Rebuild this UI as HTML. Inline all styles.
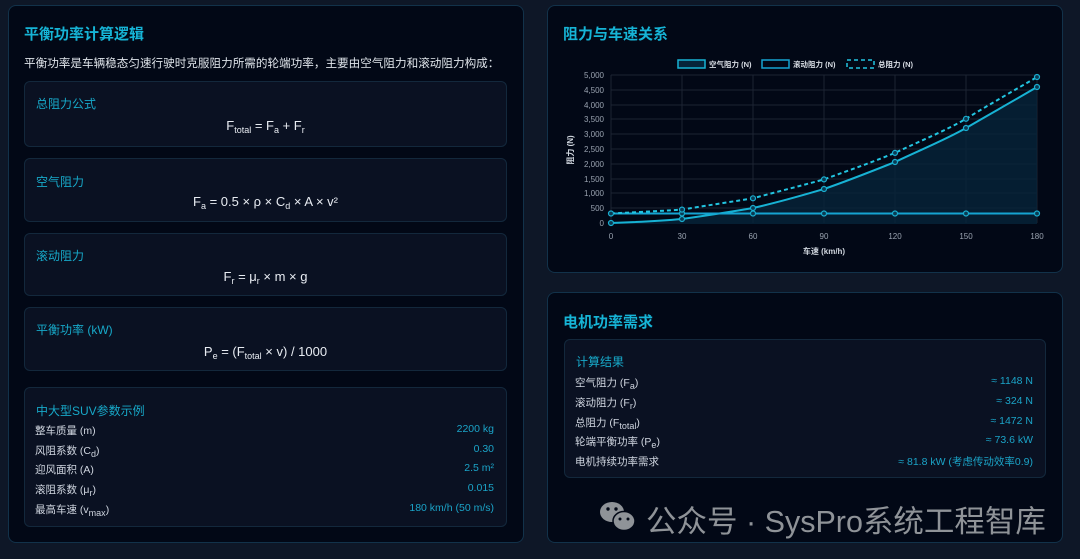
<!DOCTYPE html>
<html><head><meta charset="utf-8"><style>
*{margin:0;padding:0;box-sizing:border-box}
body{width:1080px;height:559px;background:#0e1727;font-family:"Liberation Sans","Noto Sans CJK SC",sans-serif;color:#d8dde6;position:relative;overflow:hidden}
.panel{position:absolute;background:#020816;border:1px solid #12324a;border-radius:8px}
.box{position:absolute;background:#0a1122;border:1px solid #13283c;border-radius:6px}
.h{position:absolute;color:#16b4d6;font-weight:bold;font-size:15px}
.lbl{position:absolute;color:#17a9c9;font-size:12px}
.f{position:absolute;left:0;right:0;text-align:center;font-size:13px;color:#e8ecf2}
sub{font-size:9px;vertical-align:-3px;line-height:0}
.row{position:absolute;left:10px;right:12px;font-size:10.5px;color:#d0d6e0;display:flex;justify-content:space-between}
.row span:last-child{color:#1ba4c8}
</style></head><body>
<div class="panel" style="left:8px;top:5px;width:516px;height:538px"></div>
<div class="h" style="left:24px;top:23px">平衡功率计算逻辑</div>
<div style="position:absolute;left:24px;top:55px;font-size:11.6px;color:#dfe4ea;white-space:nowrap">平衡功率是车辆稳态匀速行驶时克服阻力所需的轮端功率，主要由空气阻力和滚动阻力构成：</div>
<div class="box" style="left:24px;top:81px;width:483px;height:66px"><div class="lbl" style="left:11px;top:13px">总阻力公式</div><div class="f" style="top:36px">F<sub>total</sub> = F<sub>a</sub> + F<sub>r</sub></div></div>
<div class="box" style="left:24px;top:158px;width:483px;height:64px"><div class="lbl" style="left:11px;top:14px">空气阻力</div><div class="f" style="top:35px">F<sub>a</sub> = 0.5 × ρ × C<sub>d</sub> × A × v²</div></div>
<div class="box" style="left:24px;top:233px;width:483px;height:63px"><div class="lbl" style="left:11px;top:13px">滚动阻力</div><div class="f" style="top:35px">F<sub>r</sub> = μ<sub>r</sub> × m × g</div></div>
<div class="box" style="left:24px;top:307px;width:483px;height:64px"><div class="lbl" style="left:11px;top:13px">平衡功率 (kW)</div><div class="f" style="top:36px">P<sub>e</sub> = (F<sub>total</sub> × v) / 1000</div></div>
<div class="box" style="left:24px;top:387px;width:483px;height:140px">
<div class="lbl" style="left:11px;top:14px">中大型SUV参数示例</div>
<div class="row" style="top:35px"><span>整车质量 (m)</span><span>2200 kg</span></div>
<div class="row" style="top:55px"><span>风阻系数 (C<sub>d</sub>)</span><span>0.30</span></div>
<div class="row" style="top:74px"><span>迎风面积 (A)</span><span>2.5 m²</span></div>
<div class="row" style="top:94px"><span>滚阻系数 (μ<sub>r</sub>)</span><span>0.015</span></div>
<div class="row" style="top:114px"><span>最高车速 (v<sub>max</sub>)</span><span>180 km/h (50 m/s)</span></div>
</div>

<div class="panel" style="left:547px;top:5px;width:516px;height:268px"></div>
<div class="h" style="left:563px;top:23px">阻力与车速关系</div>
<svg style="position:absolute;left:0;top:0" width="1080" height="559" font-family="Liberation Sans, Noto Sans CJK SC, sans-serif">
<g stroke="#1c2433" stroke-width="1">
<line x1="611" y1="75" x2="1037" y2="75"/><line x1="611" y1="90" x2="1037" y2="90"/><line x1="611" y1="105" x2="1037" y2="105"/><line x1="611" y1="119" x2="1037" y2="119"/><line x1="611" y1="134" x2="1037" y2="134"/><line x1="611" y1="149" x2="1037" y2="149"/><line x1="611" y1="164" x2="1037" y2="164"/><line x1="611" y1="179" x2="1037" y2="179"/><line x1="611" y1="193" x2="1037" y2="193"/><line x1="611" y1="208" x2="1037" y2="208"/>
<line x1="611" y1="75" x2="611" y2="223"/><line x1="682" y1="75" x2="682" y2="223"/><line x1="753" y1="75" x2="753" y2="223"/><line x1="824" y1="75" x2="824" y2="223"/><line x1="895" y1="75" x2="895" y2="223"/><line x1="966" y1="75" x2="966" y2="223"/><line x1="1037" y1="75" x2="1037" y2="223"/>
</g>
<path d="M611 223 C640 222 660 221 682 219 C710 215 730 212 753 208 C780 202 800 196 824 189 C850 180 870 172 895 162 C920 150 945 140 966 128 C990 114 1015 100 1037 87 L1037 224 L611 224Z" fill="#06243a" opacity="0.8"/>
<path d="M611 223 C640 222 660 221 682 219 C710 215 730 212 753 208 C780 202 800 196 824 189 C850 180 870 172 895 162 C920 150 945 140 966 128 C990 114 1015 100 1037 87" fill="none" stroke="#17b2d4" stroke-width="2"/>
<line x1="611" y1="213.5" x2="1037" y2="213.5" stroke="#15a4d2" stroke-width="2"/>
<path d="M611 213.5 C640 212 660 211 682 209.6 C710 205 730 202 753 198.3 C780 191 800 186 824 179.4 C850 170 870 163 895 152.9 C920 141 945 131 966 118.8 C990 104 1015 90 1037 77" fill="none" stroke="#22c4e0" stroke-width="2" stroke-dasharray="4,3"/>
<g fill="#0b3a52" stroke="#1aaed0" stroke-width="1.2">
<circle cx="611" cy="223" r="2.5"/><circle cx="682" cy="219" r="2.5"/><circle cx="753" cy="208" r="2.5"/><circle cx="824" cy="189" r="2.5"/><circle cx="895" cy="162" r="2.5"/><circle cx="966" cy="128" r="2.5"/><circle cx="1037" cy="87" r="2.5"/>
<circle cx="611" cy="213.5" r="2.5"/><circle cx="682" cy="213.5" r="2.5"/><circle cx="753" cy="213.5" r="2.5"/><circle cx="824" cy="213.5" r="2.5"/><circle cx="895" cy="213.5" r="2.5"/><circle cx="966" cy="213.5" r="2.5"/><circle cx="1037" cy="213.5" r="2.5"/>
<circle cx="682" cy="209.6" r="2.5"/><circle cx="753" cy="198.3" r="2.5"/><circle cx="824" cy="179.4" r="2.5"/><circle cx="895" cy="152.9" r="2.5"/><circle cx="966" cy="118.8" r="2.5"/><circle cx="1037" cy="77" r="2.5"/>
</g>
<g font-size="8" fill="#9aa3b0" text-anchor="end">
<text x="604" y="78">5,000</text><text x="604" y="93">4,500</text><text x="604" y="108">4,000</text><text x="604" y="122">3,500</text><text x="604" y="137">3,000</text><text x="604" y="152">2,500</text><text x="604" y="167">2,000</text><text x="604" y="182">1,500</text><text x="604" y="196">1,000</text><text x="604" y="211">500</text><text x="604" y="226">0</text>
</g>
<g font-size="8" fill="#9aa3b0" text-anchor="middle">
<text x="611" y="239">0</text><text x="682" y="239">30</text><text x="753" y="239">60</text><text x="824" y="239">90</text><text x="895" y="239">120</text><text x="966" y="239">150</text><text x="1037" y="239">180</text>
<text x="824" y="254" font-weight="bold" fill="#d0d6de">车速 (km/h)</text>
<text transform="translate(573 150) rotate(-90)" font-weight="bold" fill="#d0d6de">阻力 (N)</text>
</g>
<g font-size="7.5" fill="#d8dde4" font-weight="bold">
<rect x="678" y="60" width="27" height="8" fill="#06243a" stroke="#17b2d4" stroke-width="1.5"/><text x="709" y="67">空气阻力 (N)</text>
<rect x="762" y="60" width="27" height="8" fill="#020816" stroke="#15a4d2" stroke-width="1.5"/><text x="793" y="67">滚动阻力 (N)</text>
<rect x="847" y="60" width="27" height="8" fill="none" stroke="#22c4e0" stroke-width="1.5" stroke-dasharray="4,3"/><text x="878" y="67">总阻力 (N)</text>
</g>
</svg>

<div class="panel" style="left:547px;top:292px;width:516px;height:251px"></div>
<div class="h" style="left:563px;top:311px">电机功率需求</div>
<div class="box" style="left:564px;top:339px;width:482px;height:139px">
<div class="lbl" style="left:11px;top:13px">计算结果</div>
<div class="row" style="top:35px"><span>空气阻力 (F<sub>a</sub>)</span><span>≈ 1148 N</span></div>
<div class="row" style="top:55px"><span>滚动阻力 (F<sub>r</sub>)</span><span>≈ 324 N</span></div>
<div class="row" style="top:75px"><span>总阻力 (F<sub>total</sub>)</span><span>≈ 1472 N</span></div>
<div class="row" style="top:94px"><span>轮端平衡功率 (P<sub>e</sub>)</span><span>≈ 73.6 kW</span></div>
<div class="row" style="top:114px"><span>电机持续功率需求</span><span>≈ 81.8 kW (考虑传动效率0.9)</span></div>
</div>
<svg style="position:absolute;left:598px;top:500px" width="40" height="34">
<ellipse cx="14" cy="12" rx="12" ry="10" fill="#8f9398"/>
<ellipse cx="26" cy="21" rx="11" ry="9.5" fill="#8f9398" stroke="#020816" stroke-width="1.5"/>
<circle cx="10" cy="9" r="1.7" fill="#020816"/><circle cx="18" cy="9" r="1.7" fill="#020816"/>
<circle cx="22" cy="19" r="1.5" fill="#020816"/><circle cx="30" cy="19" r="1.5" fill="#020816"/>
</svg>
<div style="position:absolute;left:646px;top:497px;font-size:30.5px;color:#8f9398;white-space:nowrap">公众号 · SysPro系统工程智库</div>
</body></html>
